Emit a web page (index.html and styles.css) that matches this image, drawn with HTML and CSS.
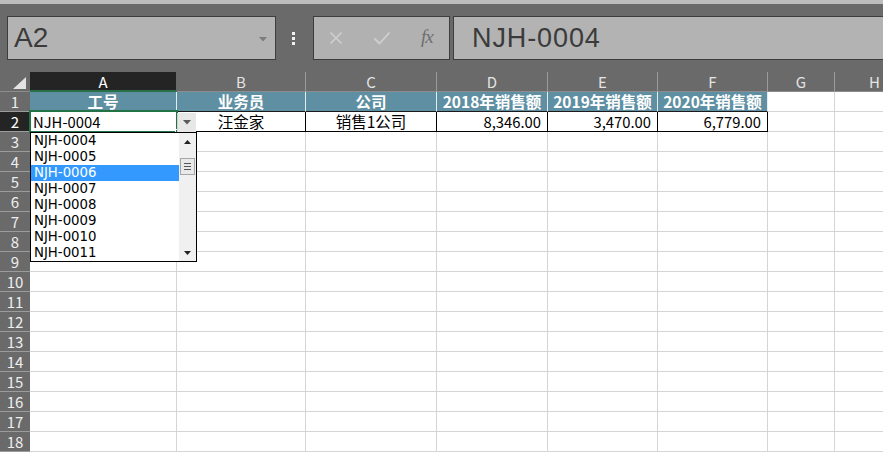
FILE: index.html
```html
<!DOCTYPE html>
<html lang="zh-CN">
<head>
<meta charset="utf-8">
<title>Excel</title>
<link rel="stylesheet" href="styles.css">
</head>
<body>
<div class="app">
  <div class="strip"></div>
  <div class="toolbar">
    <div class="namebox">
      <span class="nb-text">A2</span>
      <svg class="nb-arrow" width="8" height="5" viewBox="0 0 8 5"><path d="M0 0h8L4 4.5z" fill="#7c7c7c"/></svg>
    </div>
    <div class="dots"><i></i><i></i><i></i></div>
    <div class="fbtns">
      <svg class="fb-x" width="14" height="14" viewBox="0 0 14 14"><path d="M1.5 1.5l11 11M12.5 1.5l-11 11" stroke="#cfcfcf" stroke-width="1.6"/></svg>
      <svg class="fb-ok" width="18" height="14" viewBox="0 0 18 14"><path d="M1.5 7.5l5 5L16.5 1.5" stroke="#cfcfcf" stroke-width="1.8" fill="none"/></svg>
      <span class="fx">fx</span>
    </div>
    <div class="finput">NJH-0004</div>
  </div>
  <div class="sheet">
    <div class="grid">
      <div class="corner"><span class="tri"></span></div>
      <div class="ch sel">A</div><div class="ch">B</div><div class="ch">C</div><div class="ch">D</div><div class="ch">E</div><div class="ch">F</div><div class="ch">G</div><div class="ch">H</div>

      <div class="rh">1</div>
      <div class="h">工号</div><div class="h">业务员</div><div class="h">公司</div><div class="h">2018年销售额</div><div class="h">2019年销售额</div><div class="h">2020年销售额</div><div class="c"></div><div class="c"></div>

      <div class="rh sel">2</div>
      <div class="d left">NJH-0004</div><div class="d ctr">汪金家</div><div class="d ctr">销售1公司</div><div class="d num">8,346.00</div><div class="d num">3,470.00</div><div class="d num">6,779.00</div><div class="c"></div><div class="c"></div>

      <div class="rh">3</div><div class="c"></div><div class="c"></div><div class="c"></div><div class="c"></div><div class="c"></div><div class="c"></div><div class="c"></div><div class="c"></div>
      <div class="rh">4</div><div class="c"></div><div class="c"></div><div class="c"></div><div class="c"></div><div class="c"></div><div class="c"></div><div class="c"></div><div class="c"></div>
      <div class="rh">5</div><div class="c"></div><div class="c"></div><div class="c"></div><div class="c"></div><div class="c"></div><div class="c"></div><div class="c"></div><div class="c"></div>
      <div class="rh">6</div><div class="c"></div><div class="c"></div><div class="c"></div><div class="c"></div><div class="c"></div><div class="c"></div><div class="c"></div><div class="c"></div>
      <div class="rh">7</div><div class="c"></div><div class="c"></div><div class="c"></div><div class="c"></div><div class="c"></div><div class="c"></div><div class="c"></div><div class="c"></div>
      <div class="rh">8</div><div class="c"></div><div class="c"></div><div class="c"></div><div class="c"></div><div class="c"></div><div class="c"></div><div class="c"></div><div class="c"></div>
      <div class="rh">9</div><div class="c"></div><div class="c"></div><div class="c"></div><div class="c"></div><div class="c"></div><div class="c"></div><div class="c"></div><div class="c"></div>
      <div class="rh">10</div><div class="c"></div><div class="c"></div><div class="c"></div><div class="c"></div><div class="c"></div><div class="c"></div><div class="c"></div><div class="c"></div>
      <div class="rh">11</div><div class="c"></div><div class="c"></div><div class="c"></div><div class="c"></div><div class="c"></div><div class="c"></div><div class="c"></div><div class="c"></div>
      <div class="rh">12</div><div class="c"></div><div class="c"></div><div class="c"></div><div class="c"></div><div class="c"></div><div class="c"></div><div class="c"></div><div class="c"></div>
      <div class="rh">13</div><div class="c"></div><div class="c"></div><div class="c"></div><div class="c"></div><div class="c"></div><div class="c"></div><div class="c"></div><div class="c"></div>
      <div class="rh">14</div><div class="c"></div><div class="c"></div><div class="c"></div><div class="c"></div><div class="c"></div><div class="c"></div><div class="c"></div><div class="c"></div>
      <div class="rh">15</div><div class="c"></div><div class="c"></div><div class="c"></div><div class="c"></div><div class="c"></div><div class="c"></div><div class="c"></div><div class="c"></div>
      <div class="rh">16</div><div class="c"></div><div class="c"></div><div class="c"></div><div class="c"></div><div class="c"></div><div class="c"></div><div class="c"></div><div class="c"></div>
      <div class="rh">17</div><div class="c"></div><div class="c"></div><div class="c"></div><div class="c"></div><div class="c"></div><div class="c"></div><div class="c"></div><div class="c"></div>
      <div class="rh">18</div><div class="c"></div><div class="c"></div><div class="c"></div><div class="c"></div><div class="c"></div><div class="c"></div><div class="c"></div><div class="c"></div>
    </div>

    <div class="selbox"><span class="handle"></span></div>
    <div class="ddbtn"><svg width="8" height="5" viewBox="0 0 8 5"><path d="M0 0h8L4 4.5z" fill="#5a5a5a"/></svg></div>

    <div class="list">
      <div class="items">
        <div class="item">NJH-0004</div>
        <div class="item">NJH-0005</div>
        <div class="item on">NJH-0006</div>
        <div class="item">NJH-0007</div>
        <div class="item">NJH-0008</div>
        <div class="item">NJH-0009</div>
        <div class="item">NJH-0010</div>
        <div class="item">NJH-0011</div>
      </div>
      <div class="sbar">
        <svg class="sb-up" width="7" height="4" viewBox="0 0 7 4"><path d="M0 4h7L3.5 0z" fill="#222"/></svg>
        <div class="thumb"><i></i><i></i><i></i></div>
        <svg class="sb-dn" width="7" height="4" viewBox="0 0 7 4"><path d="M0 0h7L3.5 4z" fill="#222"/></svg>
      </div>
    </div>
  </div>
</div>
</body>
</html>
```

FILE: styles.css
```css
* { box-sizing: border-box; margin: 0; padding: 0; }
html, body { width: 883px; height: 452px; overflow: hidden; background: #6a6a6a; }
body { font-family: "Noto Sans CJK SC", "Liberation Sans", sans-serif; }

.app { width: 883px; height: 452px; overflow: hidden; }

.strip { height: 4px; background: #bdbdbd; }

.toolbar {
  height: 68px;
  background: #6a6a6a;
  display: flex;
  align-items: flex-start;
  padding-top: 12px;
  padding-left: 7px;
}
.namebox {
  flex: none;
  width: 269px;
  height: 44px;
  background: #b3b3b3;
  border: 1px solid #3d3d3d;
  display: flex;
  align-items: center;
  justify-content: space-between;
  padding: 0 8px 0 6px;
}
.nb-text {
  font-family: "Liberation Sans", sans-serif;
  font-size: 28px;
  color: #3b3b3b;
  line-height: 1;
}
.nb-arrow { margin-top: 2px; }

.dots {
  flex: none;
  width: 37px;
  height: 44px;
  display: flex;
  flex-direction: column;
  align-items: center;
  justify-content: center;
  gap: 2px;
  padding-right: 2px;
}
.dots i { display: block; width: 3px; height: 3px; background: #f2f2f2; }

.fbtns {
  flex: none;
  width: 137px;
  height: 44px;
  background: #b1b1b1;
  border: 1px solid #3d3d3d;
  display: flex;
  align-items: center;
  padding-left: 15px;
}
.fb-x { margin-right: 30px; }
.fb-ok { margin-right: 30px; }
.fx {
  font-family: "Liberation Serif", serif;
  font-style: italic;
  font-size: 19px;
  color: #6f6f6f;
  letter-spacing: -1px;
  line-height: 1;
  margin-top: -3px;
}

.finput {
  flex: none;
  margin-left: 3px;
  width: 440px;
  height: 44px;
  background: #b3b3b3;
  border: 1px solid #3d3d3d;
  border-right: none;
  font-family: "Liberation Sans", sans-serif;
  font-size: 27px;
  letter-spacing: 0.9px;
  color: #3b3b3b;
  line-height: 42px;
  padding-left: 18px;
}

.sheet { position: relative; height: 380px; overflow: hidden; }

.grid {
  display: grid;
  grid-template-columns: 30px 147px 129px 131px 111px 110px 110px 67px 80px;
  grid-auto-rows: 20px;
  width: 915px;
}

.corner { background: #6a6a6a; border-bottom: 1px solid #8c8c8c; position: relative; }
.tri {
  position: absolute;
  left: 13px; top: 5px;
  width: 0; height: 0;
  border-left: 13px solid transparent;
  border-bottom: 12px solid #e3e3e3;
}

.ch {
  background: #6a6a6a;
  color: #e4e4e4;
  border-right: 1px solid #9b9b9b;
  border-bottom: 1px solid #8c8c8c;
  text-align: center;
  font-size: 15px;
  line-height: 20px;
}
.ch.sel {
  background: #242424;
  color: #ffffff;
  border-bottom: 2px solid #2a7047;
  border-right-color: #6a6a6a;
}

.rh {
  background: #6a6a6a;
  color: #eeeeee;
  border-bottom: 1px solid #9b9b9b;
  text-align: center;
  font-size: 15px;
  line-height: 20px;
}
.rh.sel { background: #242424; color: #fff; }

.c {
  background: #ffffff;
  border-right: 1px solid #d5d5d5;
  border-bottom: 1px solid #d5d5d5;
}

.h {
  background: #5f8fa2;
  color: #ffffff;
  font-weight: bold;
  font-size: 15.5px;
  line-height: 19px;
  text-align: center;
  white-space: nowrap;
  border-right: 1px solid #e3ecef;
  border-bottom: 1px solid #1a1a1a;
}

.d {
  background: #ffffff;
  color: #000;
  font-size: 14.8px;
  line-height: 19px;
  white-space: nowrap;
  border-right: 1px solid #000;
  border-bottom: 1px solid #000;
}
.d.ctr { font-size: 15.5px; }
.left { padding-left: 3px; }
.ctr { text-align: center; }
.num { text-align: right; padding-right: 6px; }

.selbox {
  position: absolute;
  left: 29px; top: 38px;
  width: 149px; height: 23px;
  border: 2px solid #217346;
}
.handle {
  position: absolute;
  right: -4px; bottom: -3px;
  width: 5px; height: 5px;
  background: #217346;
  border: 1px solid #fff;
}

.ddbtn {
  position: absolute;
  left: 177px; top: 41px;
  width: 19px; height: 19px;
  background: #e7e7e7;
  border-left: 1px solid #cfcfcf;
  display: flex;
  align-items: center;
  justify-content: center;
}

.list {
  position: absolute;
  left: 30px; top: 60px;
  width: 167px; height: 130px;
  background: #fff;
  border: 1px solid #000;
  display: flex;
}
.items { flex: 1; }
.item {
  height: 16px;
  line-height: 16px;
  font-family: "DejaVu Sans", sans-serif;
  font-size: 13.3px;
  color: #000;
  padding-left: 3px;
  white-space: nowrap;
}
.item.on { background: #3399ff; color: #fff; }

.sbar {
  width: 17px;
  background: #f0f0f0;
  position: relative;
}
.sb-up { position: absolute; left: 5px; top: 7px; }
.sb-dn { position: absolute; left: 5px; bottom: 6px; }
.thumb {
  position: absolute;
  left: 1px; top: 25px;
  width: 15px; height: 17px;
  background: #e9e9e9;
  border: 1px solid #a6a6a6;
  display: flex;
  flex-direction: column;
  align-items: center;
  justify-content: center;
  gap: 2px;
}
.thumb i { display: block; width: 7px; height: 1px; background: #555; }
```
